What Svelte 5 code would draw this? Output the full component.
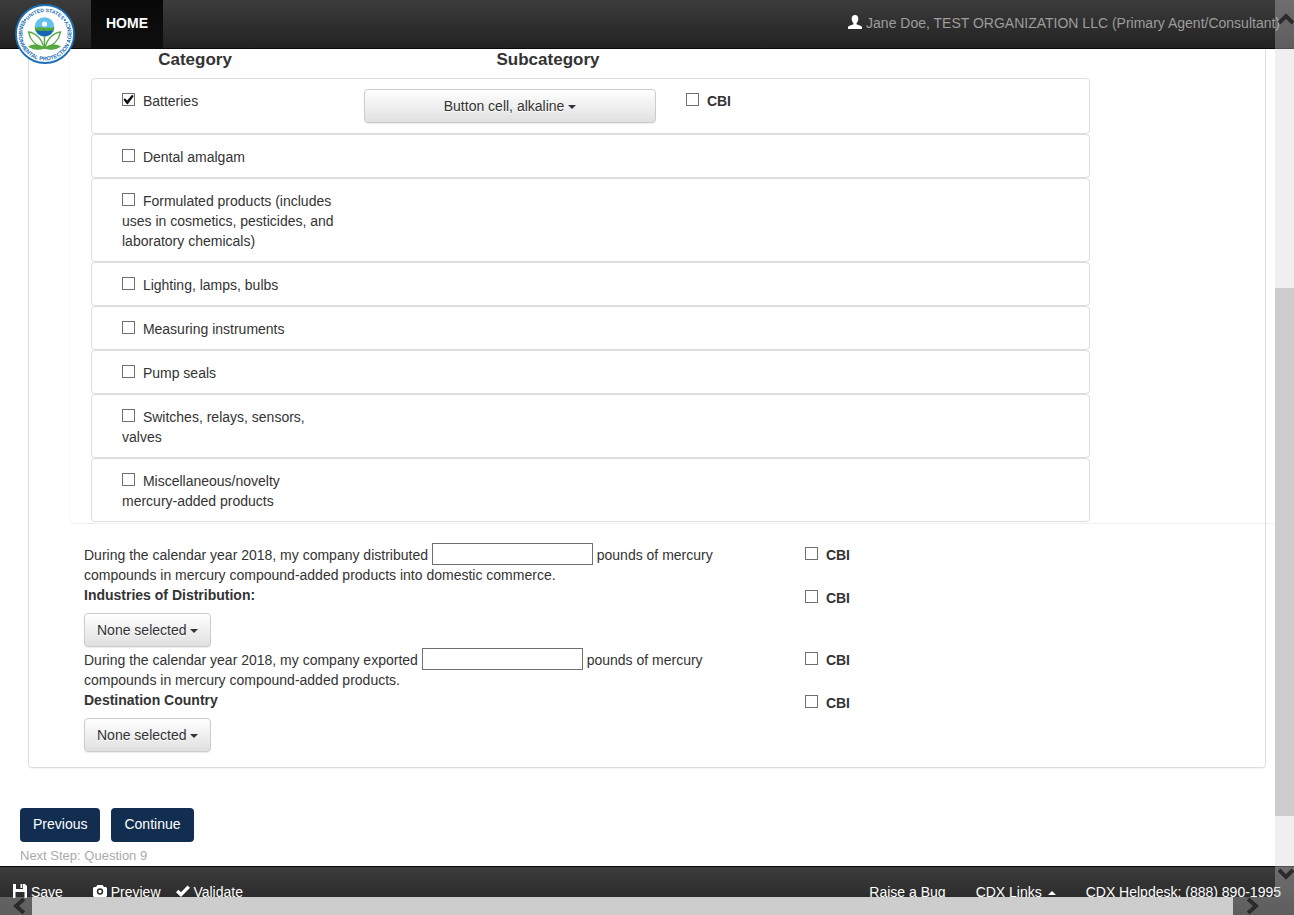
<script lang="ts">
	let categories = $state([
		{ id: 'batteries', name: 'Batteries', checked: true, sub: 'Button cell, alkaline' },
		{ id: 'dental', name: 'Dental amalgam', checked: false, sub: '' },
		{ id: 'formulated', name: 'Formulated products (includes uses in cosmetics, pesticides, and laboratory chemicals)', checked: false, sub: '' },
		{ id: 'lighting', name: 'Lighting, lamps, bulbs', checked: false, sub: '' },
		{ id: 'measuring', name: 'Measuring instruments', checked: false, sub: '' },
		{ id: 'pump', name: 'Pump seals', checked: false, sub: '' },
		{ id: 'switches', name: 'Switches, relays, sensors, valves', checked: false, sub: '' },
		{ id: 'misc', name: 'Miscellaneous/novelty mercury-added products', checked: false, sub: '' }
	]);

	const questions = [
		{ id: 'distributed', verb: 'distributed', tail: 'products into domestic commerce.', heading: 'Industries of Distribution:' },
		{ id: 'exported', verb: 'exported', tail: 'products.', heading: 'Destination Country' }
	];
</script>

<div class="page">
	<header class="navbar">
		<a class="logo" href="#epa" aria-label="EPA">
			<svg viewBox="0 0 60 60" width="60" height="60">
				<defs>
					<path id="seal-top" d="M8 30 A22 22 0 0 1 52 30" />
					<path id="seal-low" d="M11.300 11.300 A26.500 26.500 0 1 0 48.700 11.300" />
				</defs>
				<circle cx="30" cy="30" r="29" fill="#fff" stroke="#1a6fb7" stroke-width="1.8" />
				<g fill="#1a6fb7" font-weight="700" text-anchor="middle">
					<text font-size="5"><textPath href="#seal-top" startOffset="50%">UNITED STATES</textPath></text>
					<text font-size="5.600"><textPath href="#seal-low" startOffset="50%">ENVIRONMENTAL PROTECTION AGENCY</textPath></text>
				</g>
				<circle cx="10" cy="16" r="1" fill="#1a6fb7" />
				<circle cx="50" cy="16" r="1" fill="#1a6fb7" />
				<circle cx="29.500" cy="23" r="9.800" fill="#63c1ee" />
				<path d="M19.800 24 h19.400 a9.800 9.800 0 0 1 -19.400 0z" fill="#1565b3" />
				<path d="M19.800 23.600 q4 -.8 8 0 q6 .6 11.400 -.4 v2.600 q-2 1.400 -4 .6 q-3 1 -6 .2 q-4 .8 -9 -.4z" fill="#54a83f" />
				<circle cx="29.500" cy="20" r="2.600" fill="#fff" />
				<path d="M29.500 32 V45" stroke="#54a83f" stroke-width="1.4" />
				<path d="M29 44 C27 35 21 29 13.500 28 C15 35 20 42 29 44z M30 44 C32 35 38 29 45.500 28 C44 35 39 42 30 44z" fill="#fff" stroke="#54a83f" stroke-width="1.3" />
				<path d="M13 42.500 C19 39.500 25 40 29.500 44 C34 40 40 39.500 46 42.500 C40 47 34 46 29.500 44.500 C25 46 19 47 13 42.500z" fill="#54a83f" />
			</svg>
		</a>
		<a class="home" href="#home">HOME</a>
		<p class="user">
			<svg class="icon" viewBox="0 0 14 14" aria-hidden="true"><path fill="#fff" d="M7 0 C9.200 0 10.300 1.500 10.300 3.700 C10.300 5.700 9.500 7 8.600 8 V9.200 C9 10 13.600 10.300 14 12 V14 H0 V12 C.4 10.300 5 10 5.400 9.200 V8 C4.500 7 3.700 5.700 3.700 3.700 C3.700 1.500 4.800 0 7 0z" /></svg>
			Jane Doe, TEST ORGANIZATION LLC (Primary Agent/Consultant)
		</p>
	</header>

	<main>
		<div class="panel">
			<section class="products">
				<div class="list-head">
					<h2>Category</h2>
					<h2>Subcategory</h2>
				</div>
				<ul class="list">
					{#each categories as c (c.id)}
						<li>
							<label class="category"><input type="checkbox" bind:checked={c.checked} /> {c.name}</label>
							{#if c.checked && c.sub}
								<button type="button" class="select">{c.sub} <span class="caret"></span></button>
								<label class="cbi"><input type="checkbox" /> CBI</label>
							{/if}
						</li>
					{/each}
				</ul>
			</section>

			{#each questions as q (q.id)}
				<section class="question">
					<div class="answer">
						<label for={q.id}>During the calendar year 2018, my company {q.verb} <input type="text" id={q.id} /> pounds of mercury compounds in mercury compound-added {q.tail}</label>
						<h3>{q.heading}</h3>
						<button type="button" class="select">None selected <span class="caret"></span></button>
					</div>
					<div class="flags">
						<label class="cbi"><input type="checkbox" /> CBI</label>
						<label class="cbi"><input type="checkbox" /> CBI</label>
					</div>
				</section>
			{/each}
		</div>

		<div class="steps">
			<button type="button">Previous</button>
			<button type="button">Continue</button>
		</div>
		<p class="next">Next Step: Question 9</p>
	</main>

	<footer class="bottombar">
		<nav class="actions">
			<a href="#save">
				<svg class="icon" viewBox="0 0 14 14" aria-hidden="true"><path fill="#fff" fill-rule="evenodd" d="M0 0 H3 V5 H10 V0 H12 L14 2 V14 H0z M7.500 0 H9.300 V4 H7.500z M2.500 8 H11.500 V14 H2.500z" /></svg>
				Save
			</a>
			<a href="#preview">
				<svg class="icon" viewBox="0 0 14 14" aria-hidden="true"><path fill="#fff" fill-rule="evenodd" d="M4.500 1 H9.500 L11 3 H13 L14 4 V12 L13 13 H1 L0 12 V4 L1 3 H3z M7 4.300 A3.200 3.200 0 1 0 7 10.700 A3.200 3.200 0 1 0 7 4.300z M7 5.800 A1.700 1.700 0 1 1 7 9.200 A1.700 1.700 0 1 1 7 5.800z" /></svg>
				Preview
			</a>
			<a href="#validate">
				<svg class="icon" viewBox="0 0 14 14" aria-hidden="true"><path fill="#fff" d="M0 8.200 L2.300 5.800 L5 8.300 L11.500 1.500 L14 3.800 L5 13z" /></svg>
				Validate
			</a>
		</nav>
		<nav class="links">
			<a href="#bug">Raise a Bug</a>
			<a href="#links">CDX Links <span class="caret up"></span></a>
			<a href="#helpdesk">CDX Helpdesk: (888) 890-1995</a>
		</nav>
	</footer>

	<div class="scroll vertical">
		<button type="button" class="arrow up-arrow" aria-label="Scroll up"><svg viewBox="0 0 16 12" width="16" height="12"><path d="M1 10 L8 3 L15 10" /></svg></button>
		<div class="track"><div class="thumb"></div></div>
		<button type="button" class="arrow down-arrow" aria-label="Scroll down"><svg viewBox="0 0 16 12" width="16" height="12"><path d="M1 2 L8 9 L15 2" /></svg></button>
	</div>
	<div class="scroll horizontal">
		<button type="button" class="arrow left" aria-label="Scroll left"><svg viewBox="0 0 12 16" width="12" height="16"><path d="M11 1 L3 8 L11 15" /></svg></button>
		<div class="thumb"></div>
		<button type="button" class="arrow right" aria-label="Scroll right"><svg viewBox="0 0 12 16" width="12" height="16"><path d="M1 1 L9 8 L1 15" /></svg></button>
	</div>
</div>

<style>
	:global(body) {
		overflow: hidden;
		background: #fff;
	}
	.page {
		display: flex;
		flex-direction: column;
		min-height: 100vh;
		font: 14px/20px "Liberation Sans", Arial, sans-serif;
		color: #333;
	}
	.page * { box-sizing: border-box; }
	button, input { font: inherit; color: inherit; }
	h2, h3, p, ul { margin: 0; padding: 0; }
	a { color: inherit; text-decoration: none; }

	.navbar {
		position: relative;
		display: flex;
		align-items: stretch;
		height: 49px;
		padding: 0 14px 0 91px;
		border-bottom: 1px solid #080808;
		background: linear-gradient(#3c3c3c, #222);
	}
	.logo {
		position: absolute;
		left: 15px;
		top: 4px;
	}
	.logo svg { display: block; }
	.home {
		padding: 13px 15px;
		background: linear-gradient(#080808, #0f0f0f);
		color: #fff;
		font-weight: 700;
	}
	.user {
		margin-left: auto;
		padding: 13px 0;
		color: #9d9d9d;
		white-space: nowrap;
	}
	.icon {
		width: 14px;
		height: 14px;
		vertical-align: -1px;
	}

	main {
		flex: 1;
		margin-right: 19px;
		overflow: hidden;
	}
	.panel {
		margin: 0 9px 0 28px;
		padding: 0 0 15px 55px;
		border: 1px solid #ddd;
		border-top: 0;
		border-radius: 0 0 4px 4px;
		box-shadow: 0 1px 1px rgba(0, 0, 0, 0.05);
	}
	.products {
		margin: 0 -15px 21px -15px;
		padding: 0 189px 1px 21px;
		border: 1px solid rgba(0, 0, 0, 0.06);
		border-top: 0;
		border-left-color: rgba(0, 0, 0, 0.02);
		border-radius: 0 0 4px 4px;
	}
	.list-head {
		display: grid;
		grid-template-columns: 208px 498px 1fr;
		padding: 1px 0 8px;
		text-align: center;
	}
	h2 {
		font-size: 17px;
		line-height: 20px;
	}
	.list { list-style: none; }
	.list li {
		display: flex;
		align-items: flex-start;
		padding: 10px 30px;
		border: 1px solid #ddd;
		border-radius: 4px;
	}
	.category {
		width: 214px;
		padding-top: 2px;
	}
	.list .select {
		width: 292px;
		margin: 0 30px 0 28px;
	}
	.list .cbi { padding-top: 2px; }
	.cbi { font-weight: 700; }

	input[type='checkbox'] {
		appearance: none;
		position: relative;
		width: 13px;
		height: 13px;
		margin: 0 4px 0 0;
		border: 1px solid #707070;
		background: #fff;
		vertical-align: 0;
	}
	input[type='checkbox']:checked::after {
		content: '';
		position: absolute;
		inset: 0;
		background: #111;
		clip-path: polygon(4% 52%, 18% 38%, 38% 60%, 82% 6%, 98% 18%, 44% 94%, 36% 94%);
	}
	input[type='text'] {
		width: 161px;
		height: 22px;
		margin: -2px 0 0;
		border: 1px solid #707070;
		background: #fff;
		vertical-align: bottom;
	}
	.select {
		padding: 6px 12px;
		border: 1px solid #ccc;
		border-radius: 4px;
		background: linear-gradient(#fff, #e0e0e0);
		box-shadow: 0 1px 1px rgba(0, 0, 0, 0.08);
		text-shadow: 0 1px 0 #fff;
	}
	.caret {
		display: inline-block;
		border: 4px solid transparent;
		border-top-color: #333;
		border-bottom: 0;
		vertical-align: middle;
	}
	.caret.up {
		margin-left: 2px;
		border-top: 0;
		border-bottom: 4px solid #fff;
	}

	.question {
		display: grid;
		grid-template-columns: 721px 1fr;
		margin-bottom: 3px;
	}
	.question:last-child { margin-bottom: 0; }
	.answer label {
		display: block;
		max-width: 660px;
	}
	h3 {
		margin-bottom: 8px;
		font-size: 14px;
	}
	.answer .select { display: block; }
	.flags {
		display: flex;
		flex-direction: column;
		gap: 23px;
	}

	.steps {
		display: flex;
		gap: 11px;
		margin: 40px 0 4px 20px;
	}
	.steps button {
		padding: 6px 13px 8px;
		border: 0;
		border-radius: 4px;
		background: #112e51;
		color: #fff;
	}
	.next {
		margin-left: 20px;
		color: #aaa;
		font-size: 13px;
	}

	.bottombar {
		display: flex;
		justify-content: space-between;
		height: 49px;
		padding: 15px 13px 0 13px;
		border-top: 1px solid #080808;
		background: linear-gradient(#3c3c3c, #222);
		color: #fff;
		white-space: nowrap;
	}
	.actions { display: flex; gap: 15px; }
	.actions a:first-child { margin-right: 15px; }
	.links { display: flex; gap: 30px; }

	.scroll {
		position: fixed;
		display: flex;
	}
	.vertical {
		top: 0;
		right: 0;
		bottom: 0;
		flex-direction: column;
		width: 19px;
	}
	.track {
		flex: 1;
		display: flex;
		flex-direction: column;
		background: #f0f0f0;
	}
	.track::before { content: ''; flex: 239; }
	.track .thumb { flex: 528; }
	.track::after { content: ''; flex: 50; }
	.horizontal {
		left: 0;
		right: 19px;
		bottom: 0;
		height: 18px;
	}
	.thumb {
		flex: 1;
		background: #cdcdcd;
	}
	.arrow {
		display: flex;
		align-items: center;
		justify-content: center;
		padding: 0;
		border: 0;
		background: rgba(200, 200, 200, 0.36);
	}
	.vertical .arrow {
		align-items: flex-start;
		justify-content: flex-end;
		height: 49px;
	}
	.up-arrow { padding-top: 13px; }
	.down-arrow { padding-top: 2px; }
	.left {
		width: 32px;
		padding-left: 6px;
	}
	.right {
		width: 42px;
		padding-right: 2px;
	}
	.arrow path {
		fill: none;
		stroke: #2b2b2b;
		stroke-width: 4;
	}
</style>
